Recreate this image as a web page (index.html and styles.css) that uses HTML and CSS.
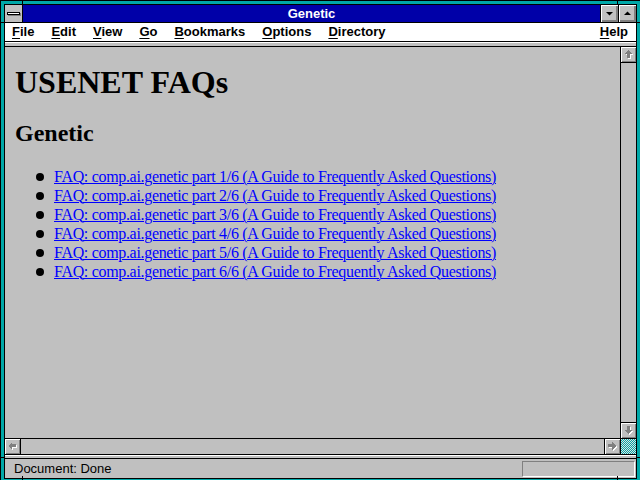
FILE: index.html
```html
<!DOCTYPE html>
<html lang="en">
<head>
    <meta charset="UTF-8">
    <title>Genetic</title>
    <link rel="stylesheet" href="styles.css">
</head>
<body>
    <div class="window">
        <span class="notch notch-top notch-left-x"></span>
        <span class="notch notch-top notch-right-x"></span>
        <span class="notch notch-bottom notch-left-x"></span>
        <span class="notch notch-bottom notch-right-x"></span>
        <span class="notch notch-side notch-upper"></span>
        <span class="notch notch-side notch-lower"></span>
        <span class="notch notch-side notch-upper notch-right"></span>
        <span class="notch notch-side notch-lower notch-right"></span>

        <div class="frame">
            <div class="titlebar">
                <div class="sysmenu"><span class="sysbar"></span></div>
                <div class="title">Genetic</div>
                <div class="capbtn">
                    <svg width="17" height="17" viewBox="0 0 17 17"><polygon points="5,7 12,7 8.5,10.5" fill="#000"/></svg>
                </div>
                <div class="capbtn">
                    <svg width="17" height="17" viewBox="0 0 17 17"><polygon points="5,10 12,10 8.5,6.5" fill="#000"/></svg>
                </div>
            </div>

            <div class="menubar">
                <span class="menu"><u>F</u>ile</span>
                <span class="menu"><u>E</u>dit</span>
                <span class="menu"><u>V</u>iew</span>
                <span class="menu"><u>G</u>o</span>
                <span class="menu"><u>B</u>ookmarks</span>
                <span class="menu"><u>O</u>ptions</span>
                <span class="menu"><u>D</u>irectory</span>
                <span class="menu menu-help"><u>H</u>elp</span>
            </div>
            <div class="sep"></div>

            <div class="main">
                <div class="content">
                    <h1>USENET FAQs</h1>
                    <h2>Genetic</h2>
                    <ul class="faq-list">
                        <li><a href="#">FAQ: comp.ai.genetic part 1/6 (A Guide to Frequently Asked Questions)</a></li>
                        <li><a href="#">FAQ: comp.ai.genetic part 2/6 (A Guide to Frequently Asked Questions)</a></li>
                        <li><a href="#">FAQ: comp.ai.genetic part 3/6 (A Guide to Frequently Asked Questions)</a></li>
                        <li><a href="#">FAQ: comp.ai.genetic part 4/6 (A Guide to Frequently Asked Questions)</a></li>
                        <li><a href="#">FAQ: comp.ai.genetic part 5/6 (A Guide to Frequently Asked Questions)</a></li>
                        <li><a href="#">FAQ: comp.ai.genetic part 6/6 (A Guide to Frequently Asked Questions)</a></li>
                    </ul>
                </div>
                <div class="vscroll">
                    <div class="sbtn sbtn-up">
                        <svg width="15" height="15" viewBox="0 0 15 15" shape-rendering="crispEdges">
                            <polygon points="8,4 12,8 10,8 10,12 7,12 7,8 5,8" fill="#fff"/>
                            <polygon points="7,3 11,7 9,7 9,11 6,11 6,7 3,7" fill="#808080"/>
                        </svg>
                    </div>
                    <div class="track"></div>
                    <div class="sbtn sbtn-down">
                        <svg width="15" height="15" viewBox="0 0 15 15" shape-rendering="crispEdges">
                            <polygon points="8,12 12,8 10,8 10,4 7,4 7,8 4,8" fill="#fff"/>
                            <polygon points="7,11 11,7 9,7 9,3 6,3 6,7 3,7" fill="#808080"/>
                        </svg>
                    </div>
                </div>
            </div>

            <div class="hscroll">
                <div class="sbtn sbtn-left">
                    <svg width="15" height="15" viewBox="0 0 15 15" shape-rendering="crispEdges">
                        <polygon points="4,8 8,4 8,6 12,6 12,9 8,9 8,12" fill="#fff"/>
                        <polygon points="3,7 7,3 7,5 11,5 11,8 7,8 7,11" fill="#808080"/>
                    </svg>
                </div>
                <div class="track"></div>
                <div class="sbtn sbtn-right">
                    <svg width="15" height="15" viewBox="0 0 15 15" shape-rendering="crispEdges">
                        <polygon points="12,8 8,4 8,6 4,6 4,9 8,9 8,12" fill="#fff"/>
                        <polygon points="11,7 7,3 7,5 3,5 3,8 7,8 7,11" fill="#808080"/>
                    </svg>
                </div>
                <div class="corner"></div>
            </div>
            <div class="sep sep-low"></div>

            <div class="status">
                <span class="status-text">Document: Done</span>
                <div class="progress"></div>
            </div>
        </div>
    </div>
</body>
</html>
```

FILE: styles.css
```css
body {
    margin: 0;
    background: #00a8a8;
}

.window {
    position: relative;
    width: 640px;
    height: 480px;
    box-sizing: border-box;
    padding: 3px;
    border-left: 1px solid #000;
    border-top: 1px solid #000;
    background: #00a8a8;
    overflow: hidden;
}

/* little resize marks across the frame */
.notch {
    position: absolute;
    background: #000;
}

.notch-top { top: 0; height: 4px; width: 1px; }
.notch-bottom { bottom: 0; height: 4px; width: 1px; }
.notch-left-x { left: 21px; }
.notch-right-x { left: 616px; }

.notch-side { left: 0; width: 4px; height: 1px; }
.notch-right { left: auto; right: 0; }
.notch-upper { top: 21px; }
.notch-lower { top: 456px; }

.frame {
    display: flex;
    flex-direction: column;
    height: 100%;
    border: 1px solid #000;
    background: #c0c0c0;
    font-family: "Liberation Sans", Arial, sans-serif;
}

/* title bar */
.titlebar {
    display: flex;
    flex: none;
    height: 17px;
    border-bottom: 1px solid #000;
}

.sysmenu {
    width: 17px;
    border-right: 1px solid #000;
    background: #c0c0c0;
    display: flex;
    align-items: center;
    justify-content: center;
}

.sysbar {
    display: block;
    width: 11px;
    height: 1px;
    border: 1px solid #000;
    background: #fff;
    box-shadow: 1px 1px 0 #808080;
}

.title {
    flex: 1;
    background: #0000a8;
    color: #fff;
    font-weight: bold;
    font-size: 13px;
    line-height: 17px;
    text-align: center;
}

.capbtn {
    width: 17px;
    border-left: 1px solid #000;
    background: #c0c0c0;
    box-shadow: inset 1px 1px 0 #fff, inset -1px -1px 0 #808080, inset -2px -2px 0 #808080;
}

.capbtn svg {
    display: block;
}

/* menu bar */
.menubar {
    display: flex;
    flex: none;
    height: 18px;
    border-bottom: 1px solid #000;
    background: #fff;
    font-size: 13px;
    font-weight: bold;
    line-height: 18px;
}

.menu {
    padding: 0 8.5px;
}

.menu:first-child {
    padding-left: 7px;
}

.menu u {
    text-decoration-thickness: 1px;
    text-underline-offset: 2px;
}

.menu-help {
    margin-left: auto;
    padding-right: 8px;
}

.sep {
    flex: none;
    height: 3px;
    border-top: 1px solid #fff;
    border-bottom: 1px solid #000;
    background: #c0c0c0;
}

.sep-low {
    height: 2px;
}

/* page area */
.main {
    flex: 1;
    display: flex;
    min-height: 0;
}

.content {
    flex: 1;
    overflow: hidden;
    padding: 0 10px;
    font-family: "Liberation Serif", "Times New Roman", serif;
    color: #000;
}

h1 {
    margin: 17px 0 0;
    font-size: 32px;
    line-height: 36px;
}

h2 {
    margin: 19px 0 0;
    font-size: 24px;
    line-height: 28px;
}

.faq-list {
    list-style: none;
    margin: 20px 0 0;
    padding-left: 39px;
    font-size: 16px;
    line-height: 19px;
    letter-spacing: -0.32px;
}

.faq-list li {
    display: flex;
    align-items: center;
}

.faq-list li::before {
    content: "";
    flex: none;
    width: 8px;
    height: 8px;
    margin-left: -18px;
    margin-right: 10px;
    border-radius: 50%;
    background: #000;
}

.faq-list a {
    color: #0000ff;
    text-decoration: underline;
    text-decoration-thickness: 1px;
}

/* scroll bars */
.vscroll {
    width: 15px;
    display: flex;
    flex-direction: column;
    border-left: 1px solid #000;
}

.track {
    flex: 1;
    background: #c0c0c0;
}

.sbtn {
    width: 15px;
    height: 15px;
    flex: none;
    background: #c0c0c0;
    box-shadow: inset 1px 1px 0 #fff, inset -1px -1px 0 #808080;
}

.sbtn svg {
    display: block;
}

.sbtn-up { border-bottom: 1px solid #000; }
.sbtn-down { border-top: 1px solid #000; }
.sbtn-left { border-right: 1px solid #000; }
.sbtn-right { border-left: 1px solid #000; }

.hscroll {
    display: flex;
    flex: none;
    height: 15px;
    border-top: 1px solid #000;
    border-bottom: 1px solid #000;
}

.corner {
    width: 15px;
    border-left: 1px solid #000;
    background: repeating-conic-gradient(#00a8a8 0 25%, #e0e0e0 0 50%) 0 0 / 2px 2px;
}

/* status bar */
.status {
    flex: none;
    height: 19px;
    display: flex;
    align-items: flex-start;
    font-size: 13px;
}

.status-text {
    padding-left: 9px;
    line-height: 19px;
}

.progress {
    width: 111px;
    height: 14px;
    margin: 2px 1px 0 auto;
    border-top: 1px solid #808080;
    border-left: 1px solid #808080;
    border-bottom: 1px solid #fff;
    border-right: 1px solid #fff;
}
```
